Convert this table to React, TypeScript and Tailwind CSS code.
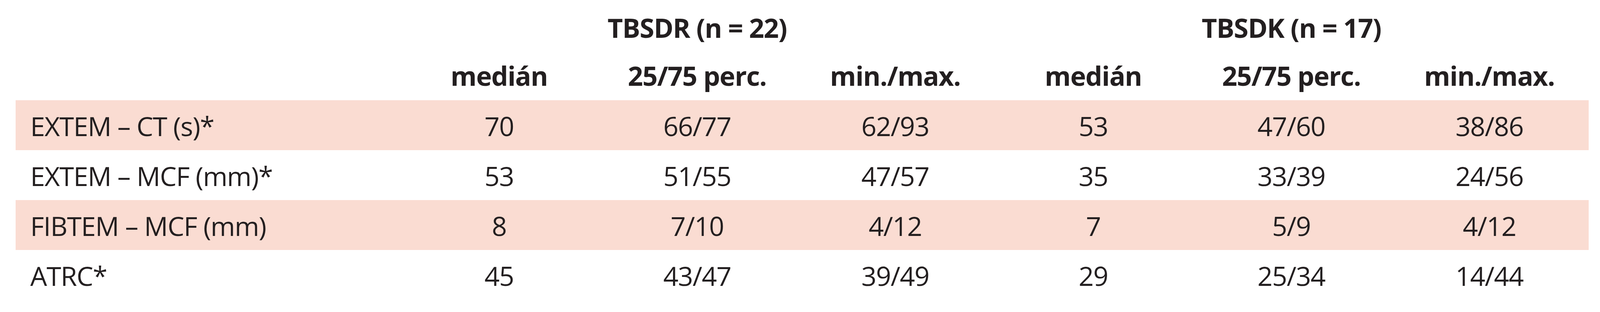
const groups = ['TBSDR (n = 22)', 'TBSDK (n = 17)'];

const subHeaders = ['medián', '25/75 perc.', 'min./max.', 'medián', '25/75 perc.', 'min./max.'];

const rows: { label: string; values: string[] }[] = [
  { label: 'EXTEM – CT (s)*', values: ['70', '66/77', '62/93', '53', '47/60', '38/86'] },
  { label: 'EXTEM – MCF (mm)*', values: ['53', '51/55', '47/57', '35', '33/39', '24/56'] },
  { label: 'FIBTEM – MCF (mm)', values: ['8', '7/10', '4/12', '7', '5/9', '4/12'] },
  { label: 'ATRC*', values: ['45', '43/47', '39/49', '29', '25/34', '14/44'] },
];

export default function App() {
  return (
    <div
      className="w-full h-[800px] overflow-hidden bg-white text-[#231f20] text-[68px] leading-none tracking-[-0.02em]"
      style={{ fontFamily: '"Open Sans", "Noto Sans", sans-serif' }}
    >
      <div className="ml-[0.98%] w-[98.3%] flex flex-col">
        {/* group headers */}
        <div className="flex h-[130px] pt-[12px] items-center font-bold">
          <div className="w-[24.44%] shrink-0" />
          {groups.map((g) => (
            <div key={g} className="w-[37.78%] shrink-0 text-center">
              {g}
            </div>
          ))}
        </div>

        {/* column headers */}
        <div className="flex h-[127px] items-center font-bold">
          <div className="w-[24.44%] shrink-0" />
          {subHeaders.map((h, i) => (
            <div key={i} className="w-[12.593%] shrink-0 text-center">
              {h}
            </div>
          ))}
        </div>

        {rows.map((r, idx) => (
          <div
            key={r.label}
            className={`flex h-[128px] items-center pt-[3px] ${idx % 2 === 0 ? 'bg-[#fadcd2]' : 'bg-white'}`}
          >
            <div className="w-[24.44%] shrink-0 pl-[0.93%]">{r.label}</div>
            {r.values.map((v, i) => (
              <div key={i} className="w-[12.593%] shrink-0 text-center">
                {v}
              </div>
            ))}
          </div>
        ))}
      </div>
    </div>
  );
}
